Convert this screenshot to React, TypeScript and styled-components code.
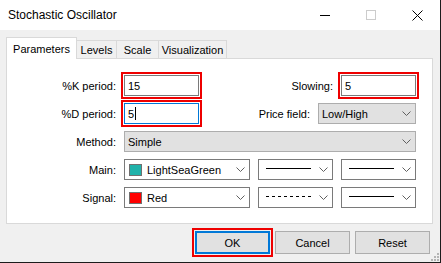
import styled, { createGlobalStyle } from "styled-components";

const GlobalStyle = createGlobalStyle`
  html, body {
    margin: 0;
    padding: 0;
    background: #1c1c1c;
  }
  body {
    width: 441px;
    height: 263px;
    overflow: hidden;
    font-family: "Liberation Sans", Arial, sans-serif;
  }
`;

const Window = styled.div`
  position: relative;
  width: 440px;
  height: 262px;
  background: #f0f0f0;
  display: flex;
  flex-direction: column;
  font-size: 11px;
  color: #000;
`;

const TitleBar = styled.header`
  height: 30px;
  flex-shrink: 0;
  display: flex;
  align-items: center;
  background: #fff;
`;

const Title = styled.div`
  flex: 1;
  padding-left: 8px;
  font-size: 12px;
`;

const CaptionButton = styled.div`
  width: 46px;
  height: 30px;
  display: flex;
  align-items: center;
  justify-content: center;
`;

const Body = styled.div`
  display: flex;
  flex-direction: column;
  padding: 7px 0 0 6px;
`;

const TabStrip = styled.div`
  position: relative;
  z-index: 1;
  height: 21px;
  display: flex;
  align-items: flex-end;
`;

const Tab = styled.div<{ $active?: boolean; $w: number }>`
  box-sizing: border-box;
  width: ${(p) => p.$w}px;
  height: ${(p) => (p.$active ? 22 : 18)}px;
  margin-bottom: ${(p) => (p.$active ? -1 : 0)}px;
  display: flex;
  align-items: center;
  justify-content: center;
  background: ${(p) => (p.$active ? "#fff" : "#f0f0f0")};
  border: 1px solid #d9d9d9;
  border-bottom: none;
  border-left: ${(p) => (p.$active ? "1px solid #d9d9d9" : "none")};
`;

const Panel = styled.section`
  box-sizing: border-box;
  width: 427px;
  height: 166px;
  padding: 16px 16px 0 0;
  display: flex;
  flex-direction: column;
  gap: 7px;
  background: #fff;
  border: 1px solid #d9d9d9;
`;

const Row = styled.div`
  height: 21px;
  display: flex;
  align-items: center;
`;

const Label = styled.label<{ $w?: number; $push?: boolean }>`
  flex-shrink: 0;
  width: ${(p) => (p.$w ? `${p.$w}px` : "auto")};
  margin-left: ${(p) => (p.$push ? "auto" : "0")};
  margin-right: 8px;
  text-align: right;
  white-space: nowrap;
`;

const Edit = styled.div<{ $focused?: boolean }>`
  box-sizing: border-box;
  width: 75px;
  height: 21px;
  padding-left: 3px;
  display: flex;
  align-items: center;
  background: #fff;
  border: 1px solid ${(p) => (p.$focused ? "#0078d7" : "#7a7a7a")};
  outline: 2px solid #ee0000;
  outline-offset: 1px;
`;

const Caret = styled.span`
  width: 1px;
  height: 13px;
  margin-left: 1px;
  background: #000;
`;

const Combo = styled.div<{ $w?: number; $flat?: boolean }>`
  box-sizing: border-box;
  flex: ${(p) => (p.$w ? "none" : "1")};
  width: ${(p) => (p.$w ? `${p.$w}px` : "auto")};
  height: 21px;
  padding: 0 4px 0 3px;
  display: flex;
  align-items: center;
  background: ${(p) => (p.$flat ? "#e1e1e1" : "#fff")};
  border: 1px solid ${(p) => (p.$flat ? "#adadad" : "#7a7a7a")};
`;

const ComboText = styled.span`
  flex: 1;
  white-space: nowrap;
`;

const FieldGroup = styled.div`
  flex: 1;
  display: flex;
  gap: 8px;
`;

const Swatch = styled.span<{ $color: string }>`
  box-sizing: border-box;
  width: 13px;
  height: 12px;
  margin: 0 5px 0 1px;
  background: ${(p) => p.$color};
  border: 1px solid #707070;
`;

const LineSample = styled.svg`
  flex: none;
  margin: 0 0 2px 4px;
`;

const ButtonRow = styled.div`
  display: flex;
  justify-content: flex-end;
  gap: 5px;
  margin-top: 7px;
  padding-right: 10px;
`;

const Button = styled.button<{ $default?: boolean }>`
  box-sizing: border-box;
  width: 75px;
  height: 23px;
  padding: 0;
  font: inherit;
  color: #000;
  background: #e1e1e1;
  border: ${(p) => (p.$default ? "2px solid #0078d7" : "1px solid #adadad")};
  outline: ${(p) => (p.$default ? "2px solid #ee0000" : "none")};
  outline-offset: 1px;
`;

const Grip = styled.svg`
  position: absolute;
  right: 1px;
  bottom: 1px;
`;

const Chevron = () => (
  <svg width="9" height="5" viewBox="0 0 9 5">
    <polyline points="0.5,0.5 4.5,4.5 8.5,0.5" fill="none" stroke="#606060" strokeWidth="1" />
  </svg>
);

const Line = ({ dashed }: { dashed?: boolean }) => (
  <LineSample width="45" height="1" viewBox="0 0 45 1">
    <line x1="0" y1="0.5" x2="45" y2="0.5" stroke="#000" strokeWidth="1" strokeDasharray={dashed ? "3 3" : undefined} />
  </LineSample>
);

export default function App() {
  return (
    <>
      <GlobalStyle />
      <Window>
        <TitleBar>
          <Title>Stochastic Oscillator</Title>
          <CaptionButton>
            <svg width="10" height="1"><rect width="10" height="1" fill="#000" /></svg>
          </CaptionButton>
          <CaptionButton>
            <svg width="10" height="10"><rect x="0.5" y="0.5" width="9" height="9" fill="none" stroke="#cccccc" /></svg>
          </CaptionButton>
          <CaptionButton>
            <svg width="11" height="11" viewBox="0 0 11 11">
              <path d="M0.5 0.5 L10.5 10.5 M10.5 0.5 L0.5 10.5" stroke="#000" strokeWidth="1" />
            </svg>
          </CaptionButton>
        </TitleBar>

        <Body>
          <TabStrip>
            <Tab $active $w={71}>Parameters</Tab>
            <Tab $w={40}>Levels</Tab>
            <Tab $w={42}>Scale</Tab>
            <Tab $w={68}>Visualization</Tab>
          </TabStrip>

          <Panel>
            <Row>
              <Label $w={109}>%K period:</Label>
              <Edit>15</Edit>
              <Label $push>Slowing:</Label>
              <Edit>5</Edit>
            </Row>
            <Row>
              <Label $w={109}>%D period:</Label>
              <Edit $focused>
                5<Caret />
              </Edit>
              <Label $push>Price field:</Label>
              <Combo $flat $w={98}>
                <ComboText>Low/High</ComboText>
                <Chevron />
              </Combo>
            </Row>
            <Row>
              <Label $w={109}>Method:</Label>
              <Combo $flat>
                <ComboText>Simple</ComboText>
                <Chevron />
              </Combo>
            </Row>
            <Row>
              <Label $w={109}>Main:</Label>
              <FieldGroup>
                <Combo>
                  <Swatch $color="#20b2aa" />
                  <ComboText>LightSeaGreen</ComboText>
                  <Chevron />
                </Combo>
                <Combo $w={75}>
                  <Line />
                  <ComboText />
                  <Chevron />
                </Combo>
                <Combo $w={75}>
                  <Line />
                  <ComboText />
                  <Chevron />
                </Combo>
              </FieldGroup>
            </Row>
            <Row>
              <Label $w={109}>Signal:</Label>
              <FieldGroup>
                <Combo>
                  <Swatch $color="#ff0000" />
                  <ComboText>Red</ComboText>
                  <Chevron />
                </Combo>
                <Combo $w={75}>
                  <Line dashed />
                  <ComboText />
                  <Chevron />
                </Combo>
                <Combo $w={75}>
                  <Line />
                  <ComboText />
                  <Chevron />
                </Combo>
              </FieldGroup>
            </Row>
          </Panel>

          <ButtonRow>
            <Button $default>OK</Button>
            <Button>Cancel</Button>
            <Button>Reset</Button>
          </ButtonRow>
        </Body>

        <Grip width="8" height="8" viewBox="0 0 8 8">
          <rect x="6" y="0" width="2" height="2" fill="#b4b4b4" />
          <rect x="3" y="3" width="2" height="2" fill="#b4b4b4" />
          <rect x="6" y="3" width="2" height="2" fill="#b4b4b4" />
          <rect x="0" y="6" width="2" height="2" fill="#b4b4b4" />
          <rect x="3" y="6" width="2" height="2" fill="#b4b4b4" />
          <rect x="6" y="6" width="2" height="2" fill="#b4b4b4" />
        </Grip>
      </Window>
    </>
  );
}
